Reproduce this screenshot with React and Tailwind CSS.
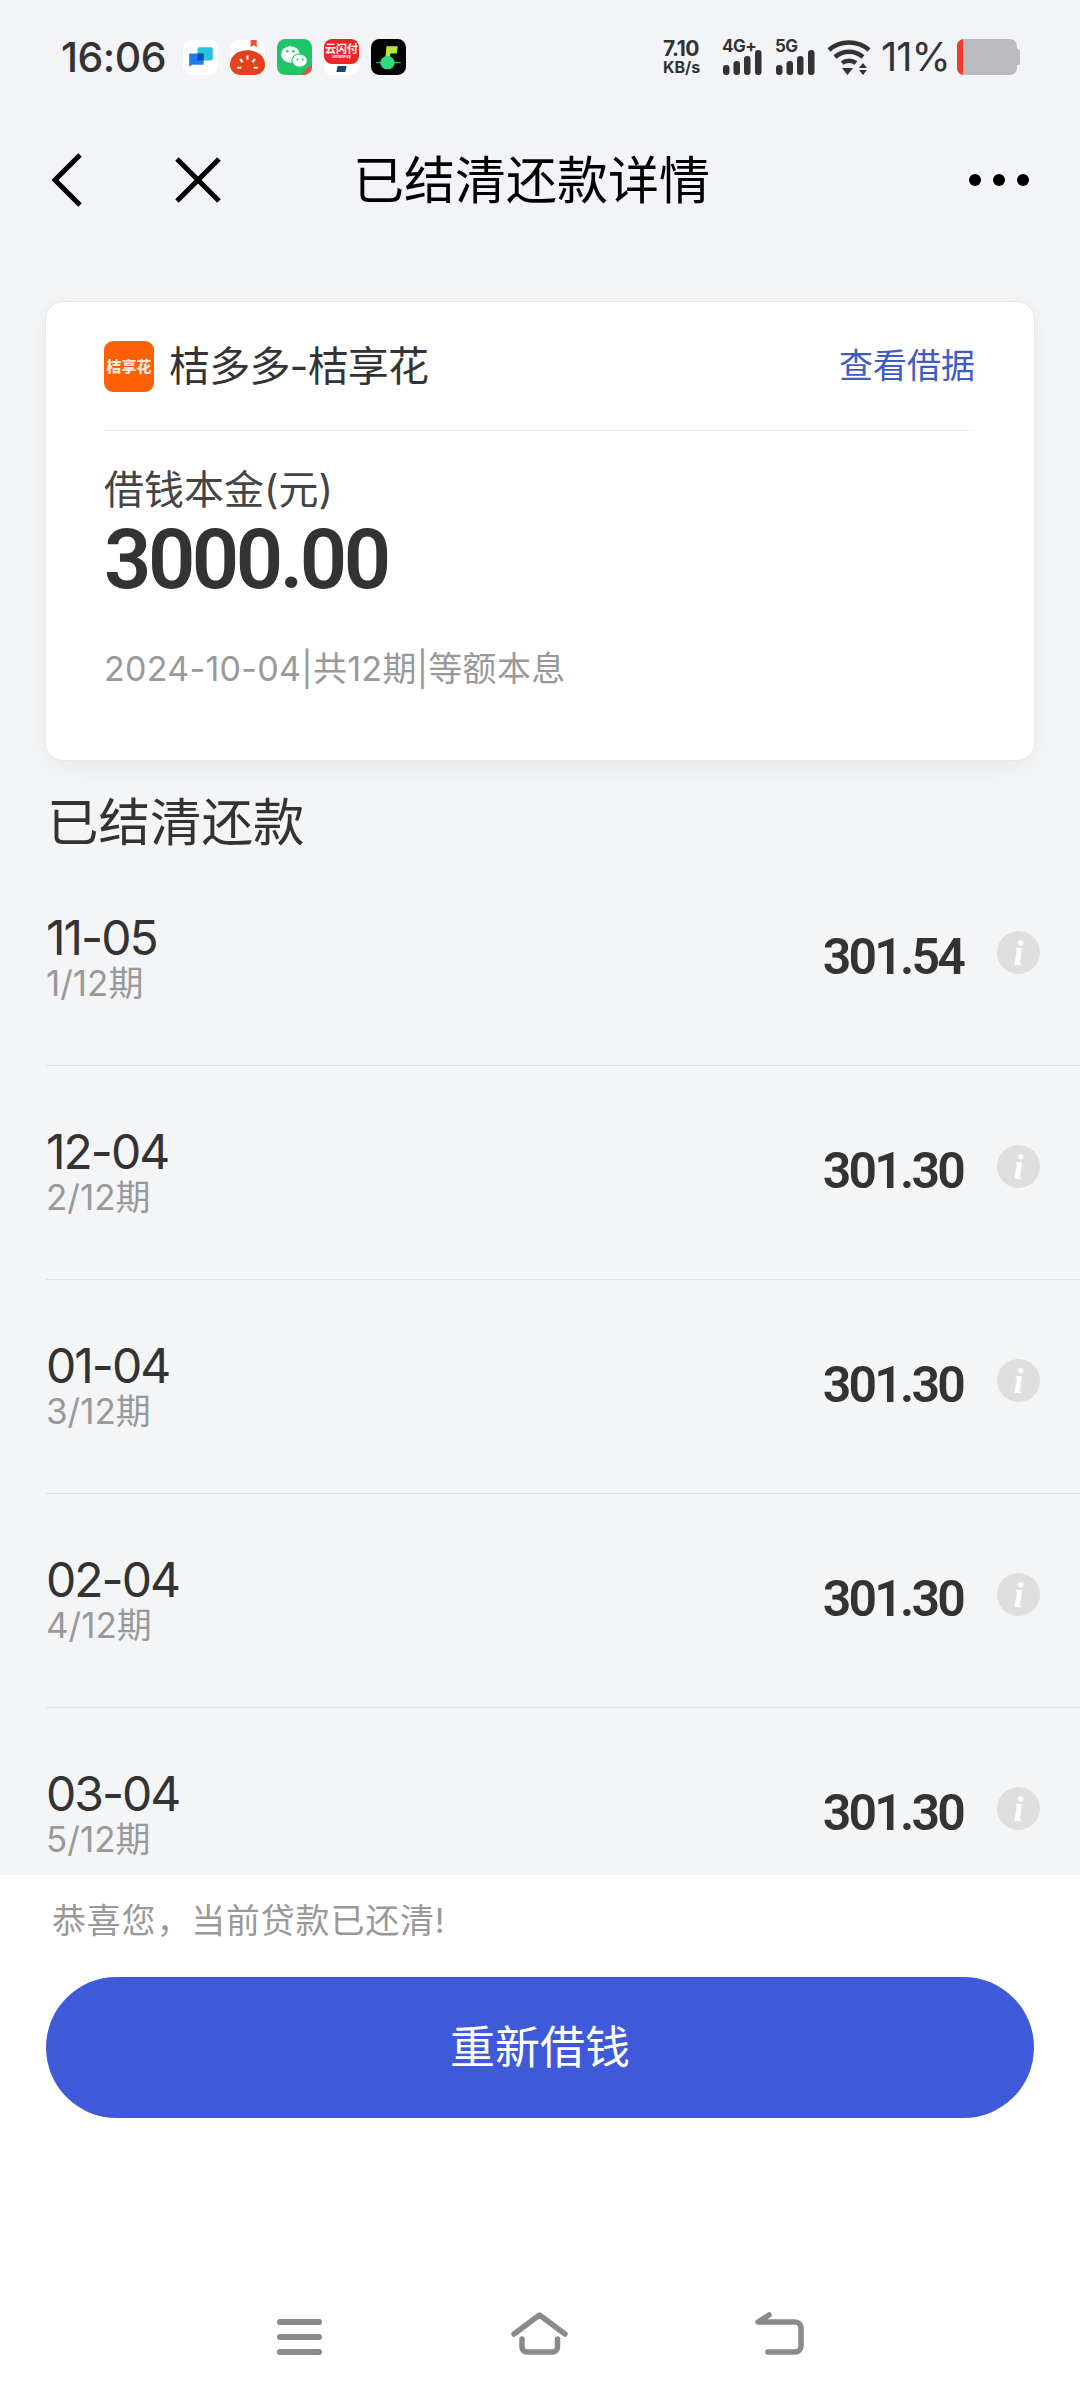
import React from 'react';

const rows = [
  { date: '11-05', term: '1/12期', amount: '301.54' },
  { date: '12-04', term: '2/12期', amount: '301.30' },
  { date: '01-04', term: '3/12期', amount: '301.30' },
  { date: '02-04', term: '4/12期', amount: '301.30' },
  { date: '03-04', term: '5/12期', amount: '301.30' },
];

// 상태바 앱 아이콘
const AppIcons = () => (
  <div className="flex items-center gap-[12px]">
    <svg width="35" height="35" viewBox="0 0 34 34">
      <rect width="34" height="34" rx="8" fill="#fff" />
      <rect x="14" y="7" width="15" height="13" rx="2" fill="#27c5dc" />
      <path d="M6 13h14v11H9l-3 2z" fill="#1f7bf2" />
      <rect x="14" y="13" width="6" height="7" fill="#0f4fb0" />
    </svg>
    <svg width="35" height="35" viewBox="0 0 34 34">
      <rect width="34" height="34" rx="8" fill="#fff" />
      <path d="M20 0h6v7l-3-2-3 2z" fill="#e8563a" />
      <path d="M0 24C0 15 8 10 17 10s17 5 17 14c0 6-5 10-10 10H10C5 34 0 30 0 24z" fill="#e5411a" />
      <path d="M16 15h2v4h-2zM9 19l2-1 2 3-2 1zM25 19l-2-1-2 3 2 1zM7 26h4v2H7zM23 26h4v2h-4z" fill="#fff" />
    </svg>
    <svg width="35" height="36" viewBox="0 0 34 35">
      <rect width="34" height="35" rx="8" fill="#1fc566" />
      <ellipse cx="13" cy="15" rx="9" ry="8" fill="#fff" />
      <ellipse cx="22" cy="21" rx="7.5" ry="6.5" fill="#fff" stroke="#1fc566" strokeWidth="1" />
      <circle cx="10" cy="12" r="1.2" fill="#1fc566" />
      <circle cx="16" cy="12" r="1.2" fill="#1fc566" />
      <circle cx="20" cy="20" r="1" fill="#1fc566" />
      <circle cx="25" cy="20" r="1" fill="#1fc566" />
      <path d="M34 24v3a8 8 0 0 1-8 8h-3z" fill="#e0504a" />
    </svg>
    <div className="w-[35px] h-[36px] rounded-[8px] bg-white overflow-hidden flex flex-col">
      <div className="h-[25px] bg-[#ee2528] rounded-b-[8px] flex flex-col items-center justify-center text-white font-bold leading-none">
        <span className="text-[11px]">云闪付</span>
        <span className="text-[4px]">UnionPay</span>
      </div>
      <div className="mx-auto mt-[2px] w-[9px] h-[6px] bg-[#20407a] skew-x-[-12deg]" />
    </div>
    <svg width="35" height="36" viewBox="0 0 34 35">
      <rect width="34" height="35" rx="8" fill="#040404" />
      <path d="M15 7h11l-1 7h-6l-1 5h-4z" fill="#b4e83a" />
      <ellipse cx="16" cy="23" rx="7" ry="6.500" fill="#27e07a" />
      <path d="M5 23h24" stroke="#27e07a" strokeWidth="1" />
    </svg>
  </div>
);

// 신호 막대
const SignalBars = () => (
  <svg width="40" height="25" viewBox="0 0 40 25" className="block">
    <rect x="1" y="15" width="6.500" height="10" rx="3" fill="#333" />
    <rect x="11.500" y="11" width="6.500" height="14" rx="3" fill="#333" />
    <rect x="22" y="6" width="6.500" height="19" rx="3" fill="#333" />
    <rect x="33" y="0" width="6.500" height="25" rx="3" fill="#333" />
  </svg>
);

const Signal = ({ label }) => (
  <div className="w-[42px] h-[36px] flex flex-col">
    <span className="text-[17px] leading-[14px] h-[11px] font-bold text-[#333] whitespace-nowrap tracking-[-0.5px]">{label}</span>
    <div className="mt-auto"><SignalBars /></div>
  </div>
);

const StatusIcons = () => (
  <div className="flex items-center">
    <div className="w-[59px] flex flex-col items-start text-[#333] font-bold leading-none">
      <span className="text-[21px] leading-[20px] tracking-[-0.5px]">7.10</span>
      <span className="text-[16px] leading-[16px]">KB/s</span>
    </div>
    <Signal label="4G+" />
    <div className="w-[11px]" />
    <Signal label="5G" />
    <svg width="44" height="36" viewBox="0 0 44 36" className="ml-[10px]">
      <path d="M2 11C13 1 31 1 42 11" fill="none" stroke="#333" strokeWidth="4.500" />
      <path d="M8 18c8-7 20-7 28 0" fill="none" stroke="#333" strokeWidth="4.500" />
      <path d="M15 24c4-3 10-3 14 0" fill="none" stroke="#333" strokeWidth="4.500" />
      <path d="M15 29h11l-5.500 7z" fill="#333" />
      <path d="M36 24l4 5h-8zM36 36l4-5h-8z" fill="#333" />
    </svg>
    <span className="ml-[10px] w-[66px] text-[40px] leading-none text-[#333] whitespace-nowrap tracking-[-1px]">11%</span>
    <div className="ml-[10px] flex items-center">
      <div className="w-[60px] h-[36px] rounded-[7px] bg-[#bcbcc0] overflow-hidden">
        <div className="w-[6px] h-full bg-[#f03a2e]" />
      </div>
      <div className="w-[3px] h-[16px] rounded-r-[2px] bg-[#bcbcc0]" />
    </div>
  </div>
);

const StatusBar = () => (
  <div className="h-[114px] pl-[61px] pr-[60px] flex items-center justify-between">
    <div className="flex items-center">
      <span className="w-[122px] text-[41px] leading-none font-medium text-[#333] tracking-[-0.5px]">16:06</span>
      <AppIcons />
    </div>
    <StatusIcons />
  </div>
);

const NavBar = () => (
  <div className="h-[132px] pl-[52px] pr-[51px] flex items-center">
    <svg width="30" height="54" viewBox="0 0 30 54">
      <path d="M28 2L3 27l25 25" fill="none" stroke="#000" strokeWidth="5" />
    </svg>
    <svg width="46" height="46" viewBox="0 0 46 46" className="ml-[93px]">
      <path d="M2 2l42 42M44 2L2 44" fill="none" stroke="#000" strokeWidth="5" />
    </svg>
    <span className="ml-[132px] text-[51px] leading-none text-black whitespace-nowrap">已结清还款详情</span>
    <div className="ml-auto flex gap-[12px]">
      <div className="w-[12px] h-[12px] rounded-full bg-black" />
      <div className="w-[12px] h-[12px] rounded-full bg-black" />
      <div className="w-[12px] h-[12px] rounded-full bg-black" />
    </div>
  </div>
);

const LoanCard = () => (
  <div className="mx-[45px] mt-[55px] h-[460px] rounded-[18px] bg-white border border-[#e6e8ea] shadow-[0_8px_30px_rgba(0,0,0,0.05)] pl-[58px] pr-[59px]">
    <div className="h-[129px] flex items-center border-b border-[#eeeeee]">
      <div className="w-[50px] h-[51px] rounded-[9px] bg-[#ff6005] flex items-center justify-center text-[15px] leading-none font-black text-[#ffe6d8] whitespace-nowrap">桔享花</div>
      <span className="ml-[15px] text-[41px] leading-none text-[#333] whitespace-nowrap tracking-[-0.8px]">桔多多-桔享花</span>
      <span className="ml-auto text-[34px] leading-none text-[#3f5bc4] whitespace-nowrap">查看借据</span>
    </div>
    <div className="mt-[36px] text-[40px] leading-[46px] text-[#444]">借钱本金(元)</div>
    <div className='mt-[7px] font-["Roboto",sans-serif] text-[83px] leading-[80px] font-semibold text-[#333] tracking-[-3.500px]'>3000.00</div>
    <div className="mt-[49px] text-[34px] leading-[40px] text-[#999] whitespace-nowrap tracking-[0.3px]">2024-10-04|共12期|等额本息</div>
  </div>
);

const InfoIcon = () => (
  <div className="w-[43px] h-[43px] rounded-full bg-[#dedede] flex items-center justify-center">
    <span className='font-["Liberation_Serif",serif] italic font-bold text-[36px] leading-none text-white'>i</span>
  </div>
);

const RepayRow = ({ date, term, amount, last }) => (
  <div className={`h-[214px] ml-[46px] flex items-start ${last ? '' : 'border-b border-[#e0e1e5]'}`}>
    <div className="pt-[60px] flex-1">
      <div className="text-[48px] leading-[52px] text-[#333] tracking-[-2px]">{date}</div>
      <div className="text-[35px] leading-[36px] text-[#999] mt-[1px]">{term}</div>
    </div>
    <div className='pt-[76px] font-["Roboto",sans-serif] text-[50px] leading-[58px] font-semibold text-[#333] tracking-[-2.800px]'>{amount}</div>
    <div className="pt-[79px] ml-[34px] mr-[40px]"><InfoIcon /></div>
  </div>
);

const Footer = () => (
  <div className="h-[525px] bg-white">
    <div className="pl-[52px] pt-[25px] h-[66px] text-[34px] leading-[42px] text-[#999] tracking-[0.8px]">恭喜您，当前贷款已还清!</div>
    <div className="mx-[46px] mt-[36px] h-[141px] rounded-full bg-[#3e5ad9] flex items-center justify-center text-[45px] text-white">重新借钱</div>
    <div className="mt-[194px] h-[43px] flex items-end pl-[277px]">
      <svg width="45" height="36" viewBox="0 0 45 36">
        <path d="M3 3h39M3 18h39M3 33h39" stroke="#8a8a8a" strokeWidth="6" strokeLinecap="round" />
      </svg>
      <svg width="57" height="43" viewBox="0 0 57 43" className="ml-[189px]">
        <path d="M3 22L28.500 3 54 22" fill="none" stroke="#8a8a8a" strokeWidth="5.500" strokeLinecap="round" strokeLinejoin="round" />
        <path d="M11 27v8a5 5 0 0 0 5 5h25.500a5 5 0 0 0 5-5v-8" fill="none" stroke="#8a8a8a" strokeWidth="5.500" strokeLinecap="round" />
      </svg>
      <svg width="49" height="43" viewBox="0 0 49 43" className="ml-[187px]">
        <path d="M14 3L3 10h37a6 6 0 0 1 6 6v18a6 6 0 0 1-6 6H13" fill="none" stroke="#8a8a8a" strokeWidth="5.500" strokeLinecap="round" strokeLinejoin="round" />
      </svg>
    </div>
  </div>
);

export default function App() {
  return (
    <div className='w-[1080px] h-[2400px] flex flex-col overflow-hidden bg-[#f4f5f7] font-["Inter","Noto_Sans_CJK_SC",sans-serif]'>
      <div className="bg-[#f3f4f8]">
        <StatusBar />
        <NavBar />
      </div>
      <div className="flex-1 overflow-hidden">
        <LoanCard />
        <h2 className="pl-[47px] pt-[32px] text-[51.500px] leading-[59px] font-normal text-[#333]">已结清还款</h2>
        <div>
          {rows.map((row, i) => (
            <RepayRow key={row.term} {...row} last={i === rows.length - 1} />
          ))}
        </div>
      </div>
      <Footer />
    </div>
  );
}
